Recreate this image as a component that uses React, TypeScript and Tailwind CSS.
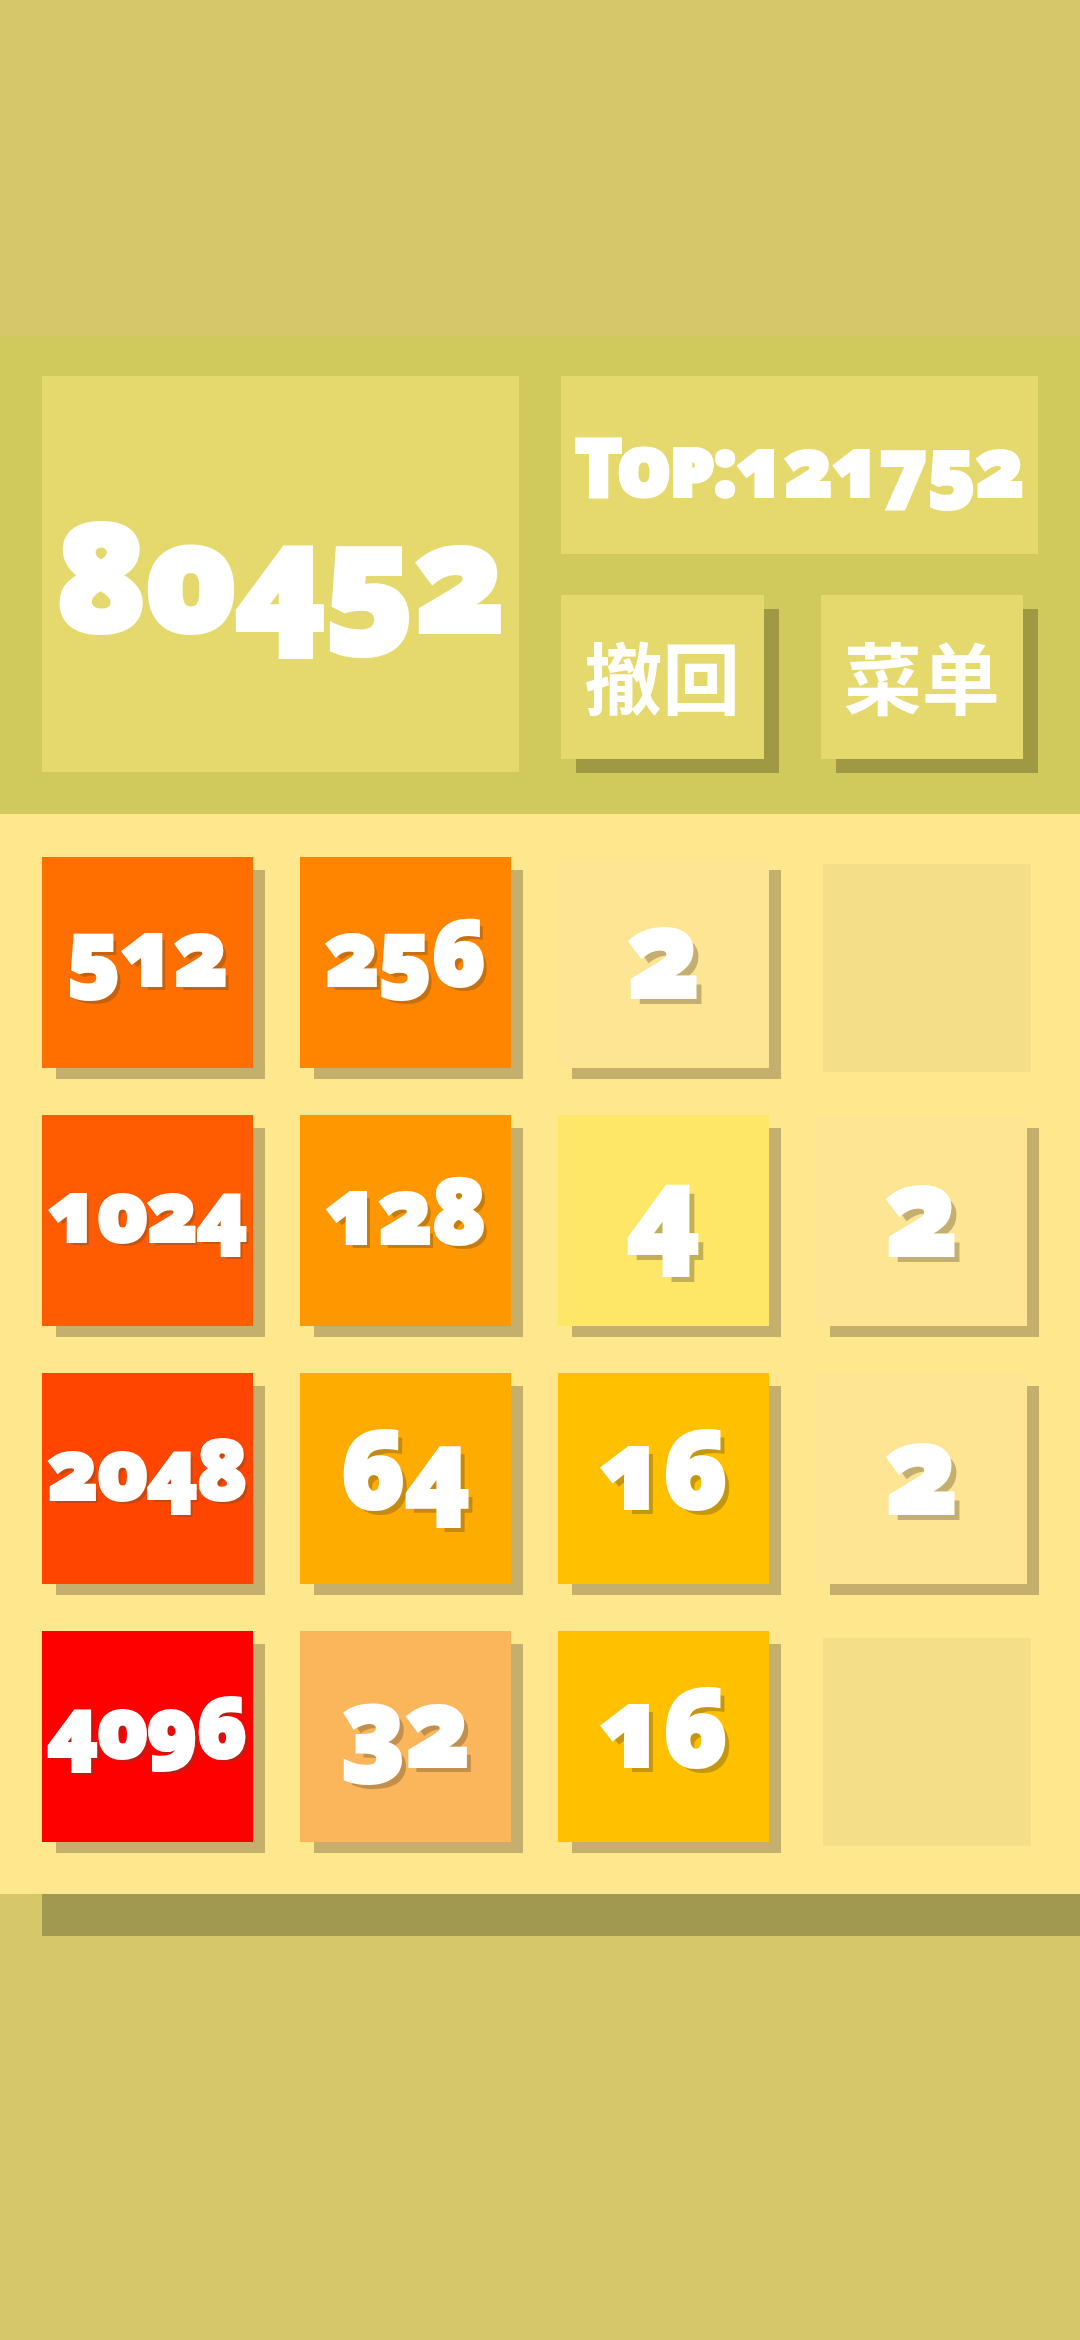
interface TileProps { value: number; }

const board: number[][] = [
  [512, 256, 2, 0],
  [1024, 128, 4, 2],
  [2048, 64, 16, 2],
  [4096, 32, 16, 0],
];

const tileColors: Record<number, string> = {
  2: 'bg-[#fee593]',
  4: 'bg-[#fee667]',
  16: 'bg-[#ffc000]',
  32: 'bg-[#fbb55b]',
  64: 'bg-[#ffac00]',
  128: 'bg-[#ff9800]',
  256: 'bg-[#ff8400]',
  512: 'bg-[#ff6f00]',
  1024: 'bg-[#ff5b00]',
  2048: 'bg-[#ff4500]',
  4096: 'bg-[#ff0000]',
};

// more digits, smaller text
const textSizes: Record<number, string> = {
  1: 'text-[120px] [text-shadow:7px_7px_0_rgba(90,74,48,0.35)]',
  2: 'text-[106px] [text-shadow:6px_6px_0_rgba(90,74,48,0.35)]',
  3: 'text-[88px] [text-shadow:5px_5px_0_rgba(90,74,48,0.35)]',
  4: 'text-[82px] [text-shadow:4px_4px_0_rgba(90,74,48,0.35)]',
};

function Tile({ value }: TileProps) {
  if (value === 0) {
    return (
      <div className="grid aspect-square"><div className="mt-[7px] ml-[7px] -mr-1 -mb-1 bg-[#f4de88]" /></div>
    );
  }

  return (
    <div className={`flex aspect-square items-center justify-center pb-6 shadow-[13px_12px_0_-1px_#c4b06c] ${tileColors[value]}`}>
      <span className={`leading-none [-webkit-text-stroke:4px_white] ${textSizes[String(value).length]}`}>{value}</span>
    </div>
  );
}

function HeaderButton({ label }: { label: string }) {
  return (
    <button type="button" className="mr-[15px] mb-[13px] flex-1 bg-[#e5d96d] pb-1 text-[78px] leading-none font-bold whitespace-nowrap shadow-[15px_14px_0_0_#9f9944] font-['Noto_Sans_CJK_SC',sans-serif]">{label}</button>
  );
}

export default function App() {
  return (
    <div className="min-h-screen bg-[#d6c86a] pt-[335px] text-white font-black oldstyle-nums font-['Noto_Sans','Noto_Sans_CJK_SC',sans-serif]">
      <header className="grid grid-cols-2 gap-[42px] bg-[#cfca5b] px-[42px] pt-[41px] pb-[42px]">
        <div className="flex items-center justify-center bg-[#e5d96d]">
          <span className="text-[148px] leading-none [-webkit-text-stroke:6px_white]">80452</span>
        </div>
        <div className="flex flex-col gap-[41px]">
          <div className="flex h-[178px] items-center justify-center bg-[#e5d96d]">
            <span className="text-[79px] leading-none whitespace-nowrap [font-variant-caps:small-caps] [-webkit-text-stroke:4px_white]">Top:121752</span>
          </div>
          <div className="flex h-[177px] gap-[42px]">
            <HeaderButton label="撤回" />
            <HeaderButton label="菜单" />
          </div>
        </div>
      </header>
      <main>
        <div className="grid grid-cols-4 gap-[47px] bg-[#fee78c] pt-[43px] pr-[53px] pb-[52px] pl-[42px]">
          {board.flat().map((value, i) => (<Tile key={i} value={value} />))}
        </div>
        <div className="ml-[42px] h-[42px] bg-[#a1994f]" />
      </main>
    </div>
  );
}
